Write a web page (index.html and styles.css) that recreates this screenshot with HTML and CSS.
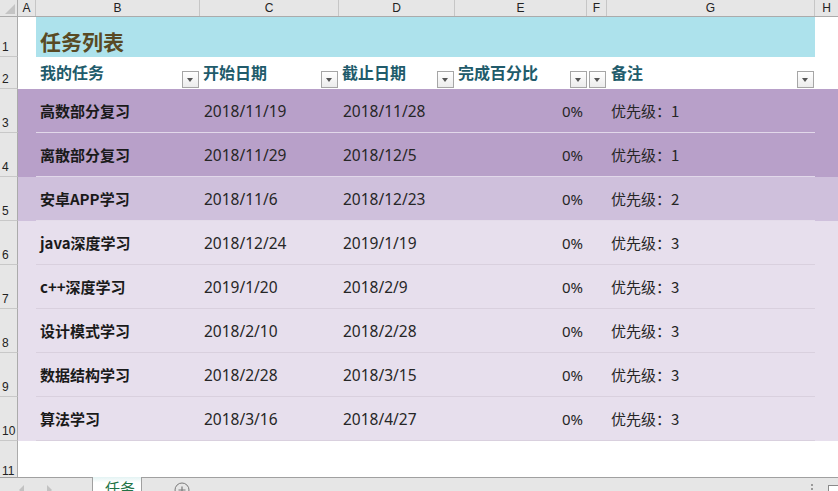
FILE: index.html
```html
<!DOCTYPE html>
<html lang="zh">
<head>
<meta charset="utf-8">
<title>任务列表</title>
<link rel="stylesheet" href="styles.css">
</head>
<body>
<div class="app">
  <div class="colhead">
    <div class="corner"><span class="tri"></span></div>
    <div class="ch w-a">A</div>
    <div class="ch w-b">B</div>
    <div class="ch w-c">C</div>
    <div class="ch w-d">D</div>
    <div class="ch w-e">E</div>
    <div class="ch w-f">F</div>
    <div class="ch w-g">G</div>
    <div class="ch w-h">H</div>
  </div>

  <div class="row r-title">
    <div class="rn">1</div>
    <div class="body">
      <div class="w-a"></div>
      <div class="title-cell">任务列表</div>
      <div class="fill"></div>
    </div>
  </div>

  <div class="row r-head">
    <div class="rn">2</div>
    <div class="body">
      <div class="w-a"></div>
      <div class="hc w-b"><span class="ht">我的任务</span><span class="fb"></span></div>
      <div class="hc w-c"><span class="ht">开始日期</span><span class="fb"></span></div>
      <div class="hc w-d"><span class="ht">截止日期</span><span class="fb"></span></div>
      <div class="hc w-e"><span class="ht">完成百分比</span><span class="fb"></span></div>
      <div class="hc w-f"><span class="fb"></span></div>
      <div class="hc w-g"><span class="ht">备注</span><span class="fb"></span></div>
      <div class="fill"></div>
    </div>
  </div>

  <div class="row r-data p1">
    <div class="rn">3</div>
    <div class="body">
      <div class="w-a"></div>
      <div class="band">
        <div class="dc w-b name">高数部分复习</div>
        <div class="dc w-c date">2018/11/19</div>
        <div class="dc w-d date">2018/11/28</div>
        <div class="dc w-e pct">0%</div>
        <div class="dc w-f"></div>
        <div class="dc w-g">优先级：1</div>
      </div>
      <div class="fill"></div>
    </div>
  </div>

  <div class="row r-data p1">
    <div class="rn">4</div>
    <div class="body">
      <div class="w-a"></div>
      <div class="band">
        <div class="dc w-b name">离散部分复习</div>
        <div class="dc w-c date">2018/11/29</div>
        <div class="dc w-d date">2018/12/5</div>
        <div class="dc w-e pct">0%</div>
        <div class="dc w-f"></div>
        <div class="dc w-g">优先级：1</div>
      </div>
      <div class="fill"></div>
    </div>
  </div>

  <div class="row r-data p2">
    <div class="rn">5</div>
    <div class="body">
      <div class="w-a"></div>
      <div class="band">
        <div class="dc w-b name">安卓APP学习</div>
        <div class="dc w-c date">2018/11/6</div>
        <div class="dc w-d date">2018/12/23</div>
        <div class="dc w-e pct">0%</div>
        <div class="dc w-f"></div>
        <div class="dc w-g">优先级：2</div>
      </div>
      <div class="fill"></div>
    </div>
  </div>

  <div class="row r-data p3">
    <div class="rn">6</div>
    <div class="body">
      <div class="w-a"></div>
      <div class="band">
        <div class="dc w-b name">java深度学习</div>
        <div class="dc w-c date">2018/12/24</div>
        <div class="dc w-d date">2019/1/19</div>
        <div class="dc w-e pct">0%</div>
        <div class="dc w-f"></div>
        <div class="dc w-g">优先级：3</div>
      </div>
      <div class="fill"></div>
    </div>
  </div>

  <div class="row r-data p3">
    <div class="rn">7</div>
    <div class="body">
      <div class="w-a"></div>
      <div class="band">
        <div class="dc w-b name">c++深度学习</div>
        <div class="dc w-c date">2019/1/20</div>
        <div class="dc w-d date">2018/2/9</div>
        <div class="dc w-e pct">0%</div>
        <div class="dc w-f"></div>
        <div class="dc w-g">优先级：3</div>
      </div>
      <div class="fill"></div>
    </div>
  </div>

  <div class="row r-data p3">
    <div class="rn">8</div>
    <div class="body">
      <div class="w-a"></div>
      <div class="band">
        <div class="dc w-b name">设计模式学习</div>
        <div class="dc w-c date">2018/2/10</div>
        <div class="dc w-d date">2018/2/28</div>
        <div class="dc w-e pct">0%</div>
        <div class="dc w-f"></div>
        <div class="dc w-g">优先级：3</div>
      </div>
      <div class="fill"></div>
    </div>
  </div>

  <div class="row r-data p3">
    <div class="rn">9</div>
    <div class="body">
      <div class="w-a"></div>
      <div class="band">
        <div class="dc w-b name">数据结构学习</div>
        <div class="dc w-c date">2018/2/28</div>
        <div class="dc w-d date">2018/3/15</div>
        <div class="dc w-e pct">0%</div>
        <div class="dc w-f"></div>
        <div class="dc w-g">优先级：3</div>
      </div>
      <div class="fill"></div>
    </div>
  </div>

  <div class="row r-data p3">
    <div class="rn">10</div>
    <div class="body">
      <div class="w-a"></div>
      <div class="band">
        <div class="dc w-b name">算法学习</div>
        <div class="dc w-c date">2018/3/16</div>
        <div class="dc w-d date">2018/4/27</div>
        <div class="dc w-e pct">0%</div>
        <div class="dc w-f"></div>
        <div class="dc w-g">优先级：3</div>
      </div>
      <div class="fill"></div>
    </div>
  </div>

  <div class="row r-last">
    <div class="rn">11</div>
    <div class="body"></div>
  </div>

  <div class="tabbar">
    <div class="nav"><span class="arr l"></span><span class="arr r"></span></div>
    <div class="tab">任务</div>
    <div class="rest">
      <span class="plus">
        <svg width="16" height="16" viewBox="0 0 16 16"><circle cx="8" cy="8" r="7" fill="none" stroke="#7a7a7a" stroke-width="1"/><path d="M8 4.5v7M4.5 8h7" stroke="#7a7a7a" stroke-width="1.2"/></svg>
      </span>
      <span class="dots"></span>
      <span class="box"></span>
    </div>
  </div>
</div>
</body>
</html>
```

FILE: styles.css
```css
* { box-sizing: border-box; margin: 0; padding: 0; }
html, body { width: 838px; height: 491px; overflow: hidden; background: #fff; }
body { font-family: "Noto Sans CJK SC", "Noto Sans", sans-serif; color: #222; }

.app { width: 838px; height: 491px; display: flex; flex-direction: column; overflow: hidden; }

/* widths */
.w-a { width: 18px; flex: none; }
.w-b { width: 164px; flex: none; }
.w-c { width: 139px; flex: none; }
.w-d { width: 116px; flex: none; }
.w-e { width: 132px; flex: none; }
.w-f { width: 20px; flex: none; }
.w-g { width: 208px; flex: none; }
.w-h { flex: 1; }
.fill { flex: 1; }

/* column header */
.colhead { height: 17px; flex: none; display: flex; background: #e6e6e6; border-bottom: 1px solid #ababab; }
.corner { width: 18px; flex: none; border-right: 1px solid #ababab; position: relative; }
.corner .tri { position: absolute; right: 2px; bottom: 2px; width: 0; height: 0; border-left: 10px solid transparent; border-bottom: 10px solid #c4c4c4; }
.ch { border-right: 1px solid #c6c6c6; font-family: "Liberation Sans", sans-serif; font-size: 12px; line-height: 16px; text-align: center; color: #222; }
.ch.w-h { border-right: none; }

/* rows */
.row { display: flex; flex: none; }
.rn { width: 18px; flex: none; background: #e6e6e6; border-right: 1px solid #ababab; border-bottom: 1px solid #c8c8c8; font-family: "Liberation Sans", sans-serif; font-size: 12px; color: #222; display: flex; align-items: flex-end; padding: 0 0 3px 2px; line-height: 12px; }
.body { flex: 1; display: flex; }

.r-title { height: 40px; }
.title-cell { width: 779px; flex: none; background: #ade2ec; font-size: 21px; font-weight: bold; color: #594a24; display: flex; align-items: flex-end; padding: 0 0 5px 4px; line-height: 22px; }

.r-head { height: 32px; }
.hc { position: relative; display: flex; align-items: center; padding-left: 3px; }
.hc.w-b, .hc.w-g { padding-left: 4px; }
.ht { font-size: 16px; font-weight: bold; color: #215b6b; line-height: 20px; margin-top: -2px; }
.fb { position: absolute; right: 1px; bottom: 1px; width: 17px; height: 17px; border: 1px solid #a6a6a6; background: linear-gradient(#ffffff, #ececec); }
.fb::after { content: ""; position: absolute; left: 4px; top: 6px; border-left: 3.5px solid transparent; border-right: 3.5px solid transparent; border-top: 4px solid #555; }
.hc.w-e .fb { right: 0; }

.r-data { height: 44px; }
.r-data .body { background: var(--bg); }
.p1 { --bg: #b8a0c9; --ln: #e2d8ea; }
.p2 { --bg: #cfc0dc; --ln: #e4dcea; }
.p3 { --bg: #e7dfed; --ln: #d9d0de; }
.band { width: 779px; flex: none; display: flex; border-bottom: 1px solid var(--ln); }
.dc { display: flex; align-items: center; font-size: 15px; color: #262626; padding-left: 4px; white-space: nowrap; }
.dc.date { font-family: "Noto Sans", "Noto Sans CJK SC", sans-serif; font-size: 15.5px; }
.dc.name { font-weight: bold; color: #1a1a1a; padding-left: 4px; }
.dc.pct { justify-content: flex-end; padding: 0 4px 0 0; font-family: "Noto Sans", sans-serif; }

.r-last { height: 36px; }
.r-last .rn { border-bottom: none; padding-bottom: 0; align-items: flex-end; overflow: hidden; }

/* tab bar */
.tabbar { height: 14px; flex: none; display: flex; background: #e6e6e6; overflow: hidden; }
.nav { width: 93px; flex: none; border-top: 1px solid #a0a0a0; border-right: 1px solid #a0a0a0; position: relative; }
.arr { position: absolute; top: 7px; width: 0; height: 0; border-top: 5px solid transparent; border-bottom: 5px solid transparent; }
.arr.l { left: 19px; border-right: 5px solid #c2c2c2; }
.arr.r { left: 47px; border-left: 5px solid #c2c2c2; }
.tab { width: 49px; flex: none; background: linear-gradient(#e3f3f3, #ffffff 40%); color: #217346; font-size: 15px; line-height: 16px; padding: 3px 0 0 12px; border-right: 1px solid #a0a0a0; }
.rest { flex: 1; border-top: 1px solid #a0a0a0; position: relative; }
.plus { position: absolute; left: 32px; top: 4px; display: block; width: 16px; height: 16px; }
.plus svg { display: block; }
.dots { position: absolute; left: 669px; top: 6px; width: 2px; height: 2px; background: #9a9a9a; box-shadow: 0 4px 0 #9a9a9a; }
.box { position: absolute; left: 686px; top: 7px; width: 12px; height: 12px; border: 1px solid #8a8a8a; background: #fff; }
```
